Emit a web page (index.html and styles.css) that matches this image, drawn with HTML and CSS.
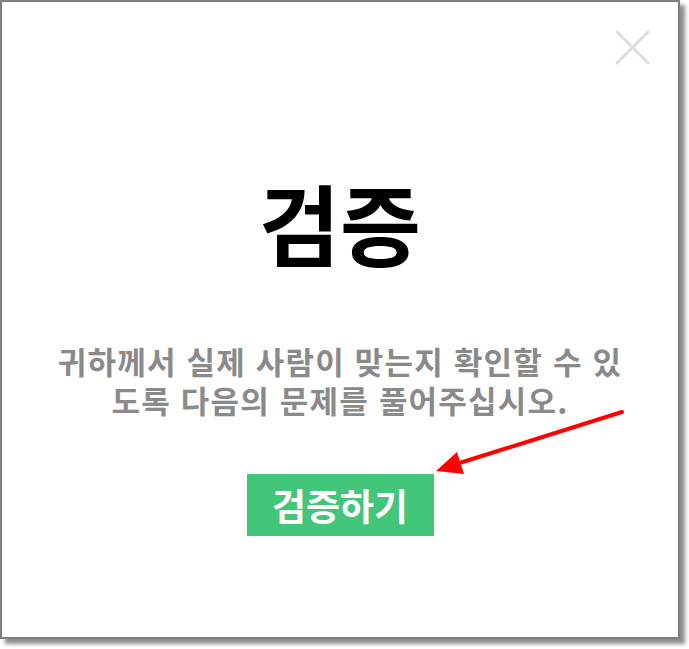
FILE: index.html
```html
<!DOCTYPE html>
<html lang="ko">
<head>
<meta charset="utf-8">
<link rel="stylesheet" href="styles.css">
</head>
<body>
<div class="dialog">
  <button class="close" aria-label="닫기">
    <svg width="37" height="37" viewBox="0 0 37 37"><path d="M3 3 L34 34 M34 3 L3 34" stroke="#dcdcdc" stroke-width="3" stroke-linecap="round" fill="none"/></svg>
  </button>
  <h1 class="title">검증</h1>
  <p class="desc">귀하께서 실제 사람이 맞는지 확인할 수 있도록 다음의 문제를 풀어주십시오.</p>
  <button class="verify">검증하기</button>
  <svg class="arrow" width="689" height="649" viewBox="0 0 689 649">
    <line x1="622" y1="412" x2="450" y2="466" stroke="#f00" stroke-width="4" stroke-linecap="round"/>
    <polygon points="436,471 457,452 464,474" fill="#f00"/>
  </svg>
</div>
</body>
</html>
```
FILE: styles.css
```css
html, body {
  margin: 0;
  padding: 0;
  background: #fff;
}
body {
  width: 689px;
  height: 649px;
  font-family: "Noto Sans CJK KR", "Noto Sans", sans-serif;
}
.dialog {
  position: relative;
  box-sizing: border-box;
  width: 680px;
  height: 639px;
  border: 2px solid #7f7f7f;
  box-shadow: 5px 5px 4px rgba(0, 0, 0, 0.45);
  background: #fff;
  display: flex;
  flex-direction: column;
  align-items: center;
  padding-top: 164px;
}
.close {
  position: absolute;
  top: 27px;
  right: 27px;
  padding: 0;
  border: 0;
  background: none;
  width: 37px;
  height: 37px;
}
.title {
  margin: 0;
  font-size: 88px;
  line-height: 110px;
  font-weight: 700;
  color: #000;
}
.desc {
  margin: 65px 0 0;
  width: 590px;
  text-align: center;
  font-size: 31px;
  line-height: 39px;
  letter-spacing: 1.2px;
  font-weight: 700;
  color: #8a8a8a;
  word-break: break-all;
}
.verify {
  margin-top: 55px;
  width: 187px;
  height: 62px;
  border: 0;
  background: #42c67a;
  color: #fff;
  font-family: "Noto Sans CJK KR", sans-serif;
  font-size: 37px;
  font-weight: 700;
  padding: 0;
}
.arrow {
  position: absolute;
  left: -2px;
  top: -2px;
  pointer-events: none;
}
```
